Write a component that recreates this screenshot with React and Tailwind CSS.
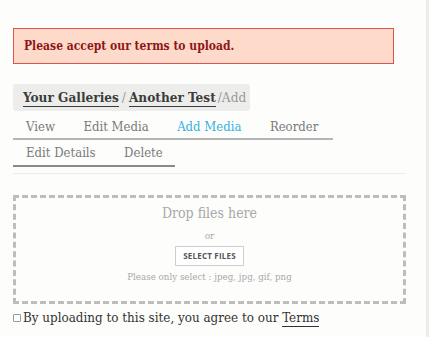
const serif = { fontFamily: '"DejaVu Serif Condensed", "DejaVu Serif", serif' };

function Tab({ label, active }) {
  return (
    <span className={`mr-[28.5px] ${active ? 'text-[#37b1dc]' : 'text-[#7a7a7a]'}`}>
      {label}
    </span>
  );
}

export default function App() {
  return (
    <div className="flex min-h-screen bg-[#fdfdfc]" style={serif}>
      <main className="flex-1 pl-[13px] pr-[20px] pt-[28px]">
        <div className="w-[381px] h-[36px] flex items-center px-[10px] bg-[#fedacb] border border-[#d9534f]">
          <span className="text-[12px] font-bold text-[#8e1717]">Please accept our terms to upload.</span>
        </div>

        <div className="mt-[20px] w-[237px] h-[27px] flex items-center px-[10px] bg-[#ededeb] rounded-[3px] text-[13.5px] font-bold text-[#3c3c3c] whitespace-nowrap">
          <span className="border-b border-[#3c3c3c] leading-[17px]">Your Galleries</span>
          <span className="font-normal text-[#9a9a9a] mx-[3px]">/</span>
          <span className="border-b border-[#3c3c3c] leading-[17px]">Another Test</span>
          <span className="font-normal text-[#9a9a9a] ml-[2px]">/Add</span>
        </div>

        <div className="mt-[4px] text-[13px] whitespace-nowrap">
          <div className="flex w-[320px] h-[25px] items-center pl-[13px] border-b-2 border-[#b5b5b5]">
            <Tab label="View" />
            <Tab label="Edit Media" />
            <Tab label="Add Media" active />
            <Tab label="Reorder" />
          </div>
          <div className="flex w-[162px] h-[27px] items-center pl-[13px] border-b-2 border-[#8a8a8a]">
            <Tab label="Edit Details" />
            <Tab label="Delete" />
          </div>
        </div>

        <div className="mt-[6px] w-[393px] border-t border-[#ededed]" />

        <div className="mt-[21px] w-[393px] h-[109px] border-[3px] border-dashed border-[#bdbdbd] flex flex-col items-center pt-[5px] text-[#a8a8a8]">
          <span className="text-[14px]">Drop files here</span>
          <span className="mt-[4px] text-[10px]">or</span>
          <button className="mt-[3px] h-[20px] px-[7px] border border-[#cfcfcf] bg-white text-[8px] font-bold text-[#555] tracking-[0.2px]" style={{ fontFamily: '"Open Sans", sans-serif' }}>
            SELECT FILES
          </button>
          <span className="mt-[4px] text-[9.7px]">Please only select : jpeg, jpg, gif, png</span>
        </div>

        <label className="mt-[5px] flex items-center text-[13.3px] leading-[18px] text-[#333] whitespace-nowrap">
          <span className="w-[8px] h-[8px] border border-[#999] rounded-[1px] bg-white mr-[2px]" />
          By uploading to this site, you agree to our&nbsp;
          <span className="border-b border-[#333] leading-[17px]">Terms</span>
        </label>
      </main>
      <div className="w-[3px] bg-[#ececec]" />
    </div>
  );
}
